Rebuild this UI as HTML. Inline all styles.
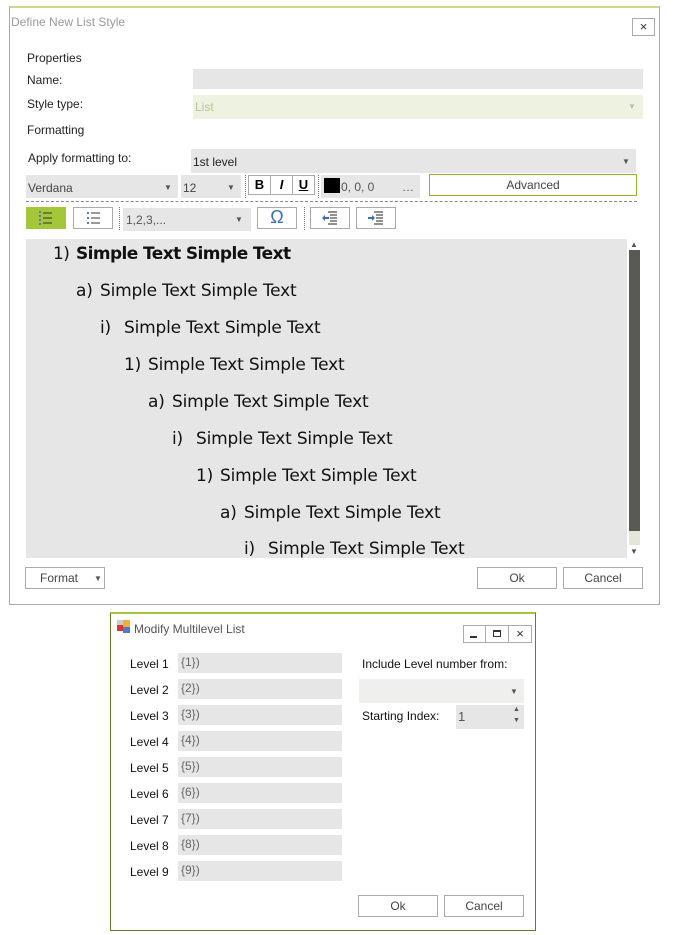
<!DOCTYPE html>
<html><head><meta charset="utf-8"><style>
*{box-sizing:border-box;margin:0;padding:0}
body{width:678px;height:935px;background:#fff;font-family:"Liberation Sans",sans-serif;font-size:12px;color:#222;position:relative;overflow:hidden}
.a{position:absolute}
.g{background:#e6e6e6}
.btn{position:absolute;border:1px solid #ababab;background:#fff;text-align:center;color:#444}
.dd{position:absolute;font-size:8px;color:#555}
.pv{position:absolute;font-family:"DejaVu Sans",sans-serif;font-size:17px;color:#111;letter-spacing:-0.2px;white-space:nowrap}
.pv b{display:inline-block;width:24px;font-weight:normal}
.lv{position:absolute;left:130px;font-size:12px;color:#111}
.lf{position:absolute;left:178px;width:164px;height:20px;background:#e6e6e6;color:#666;padding:2px 0 0 3px}
</style></head><body>
<div class="a" style="left:9px;top:6px;width:651px;height:599px;border:1px solid #a9a9a9;border-top:2px solid #c8dc8c"></div>
<div class="a" style="left:11px;top:15px;color:#999;font-size:12px">Define New List Style</div>
<div class="btn" style="left:632px;top:18px;width:23px;height:18px;line-height:15px;font-size:13px;color:#333">×</div>
<div class="a" style="left:27px;top:51px">Properties</div>
<div class="a" style="left:27px;top:73px">Name:</div>
<div class="a g" style="left:193px;top:69px;width:450px;height:20px"></div>
<div class="a" style="left:27px;top:97px">Style type:</div>
<div class="a" style="left:193px;top:95px;width:450px;height:24px;background:#eef2e0;color:#b5c59a;padding:5px 0 0 2px">List</div>
<div class="dd" style="left:628px;top:102px;color:#b5c59a">▼</div>
<div class="a" style="left:27px;top:123px">Formatting</div>
<div class="a" style="left:28px;top:151px">Apply formatting to:</div>
<div class="a g" style="left:191px;top:149px;width:445px;height:24px;padding:6px 0 0 2px">1st level</div>
<div class="dd" style="left:622px;top:157px">▼</div>
<div class="a g" style="left:26px;top:175px;width:152px;height:23px;padding:6px 0 0 2px;color:#444">Verdana</div>
<div class="dd" style="left:164px;top:183px">▼</div>
<div class="a g" style="left:181px;top:175px;width:60px;height:23px;padding:6px 0 0 2px;color:#444">12</div>
<div class="dd" style="left:227px;top:183px">▼</div>
<div class="a" style="left:245px;top:175px;height:23px;border-left:1px dotted #777"></div>
<div class="btn" style="left:248px;top:175px;width:23px;height:20px;font-weight:bold;font-size:13px;line-height:18px;color:#000">B</div>
<div class="btn" style="left:270px;top:175px;width:23px;height:20px;font-weight:bold;font-style:italic;font-size:13px;line-height:18px;color:#000">I</div>
<div class="btn" style="left:292px;top:175px;width:23px;height:20px;font-weight:bold;text-decoration:underline;font-size:13px;line-height:18px;color:#000">U</div>
<div class="a" style="left:318px;top:175px;height:23px;border-left:1px dotted #777"></div>
<div class="a g" style="left:321px;top:175px;width:99px;height:23px"></div>
<div class="a" style="left:324px;top:178px;width:16px;height:15px;background:#000"></div>
<div class="a" style="left:341px;top:180px;color:#555">0, 0, 0</div>
<div class="a" style="left:402px;top:180px;color:#555">…</div>
<div class="a" style="left:429px;top:174px;width:208px;height:22px;border:1px solid #8dbb1f;text-align:center;line-height:20px;color:#444">Advanced</div>
<div class="a" style="left:26px;top:201px;width:611px;border-top:1px dashed #888"></div>
<div class="a" style="left:26px;top:207px;width:40px;height:22px;background:#a4c639"></div>
<svg class="a" style="left:36px;top:210px" width="18" height="16"><g fill="#5a7ab8"><rect x="3" y="1" width="2" height="2"/><rect x="3" y="5" width="2" height="2"/><rect x="3" y="9" width="2" height="2"/><rect x="3" y="13" width="2" height="2"/></g><g stroke="#333"><line x1="7" y1="3" x2="16" y2="3"/><line x1="7" y1="8" x2="16" y2="8"/><line x1="7" y1="13" x2="16" y2="13"/></g></svg>
<div class="btn" style="left:73px;top:207px;width:40px;height:22px"></div>
<svg class="a" style="left:84px;top:210px" width="18" height="16"><g fill="#5a7ab8"><rect x="3" y="2" width="2" height="2"/><rect x="3" y="7" width="2" height="2"/><rect x="3" y="12" width="2" height="2"/></g><g stroke="#333"><line x1="7" y1="3" x2="16" y2="3"/><line x1="7" y1="8" x2="16" y2="8"/><line x1="7" y1="13" x2="16" y2="13"/></g></svg>
<div class="a" style="left:119px;top:207px;height:23px;border-left:1px dotted #777"></div>
<div class="a g" style="left:123px;top:208px;width:128px;height:23px;padding:5px 0 0 3px;color:#555">1,2,3,...</div>
<div class="dd" style="left:235px;top:215px">▼</div>
<div class="btn" style="left:257px;top:207px;width:40px;height:22px;color:#3a6fc0;font-size:18px;line-height:19px">Ω</div>
<div class="a" style="left:304px;top:207px;height:23px;border-left:1px dotted #777"></div>
<div class="btn" style="left:310px;top:207px;width:40px;height:22px"></div>
<svg class="a" style="left:321px;top:210px" width="18" height="16"><g stroke="#222"><line x1="7" y1="2" x2="16" y2="2"/><line x1="9" y1="5" x2="16" y2="5"/><line x1="9" y1="8" x2="16" y2="8"/><line x1="9" y1="11" x2="16" y2="11"/><line x1="7" y1="14" x2="16" y2="14"/></g><path d="M2 8h6" stroke="#3a6fc0" stroke-width="2"/><path d="M1 8l3-3v6z" fill="#3a6fc0"/></svg>
<div class="btn" style="left:356px;top:207px;width:40px;height:22px"></div>
<svg class="a" style="left:367px;top:210px" width="18" height="16"><g stroke="#222"><line x1="7" y1="2" x2="16" y2="2"/><line x1="9" y1="5" x2="16" y2="5"/><line x1="9" y1="8" x2="16" y2="8"/><line x1="9" y1="11" x2="16" y2="11"/><line x1="7" y1="14" x2="16" y2="14"/></g><path d="M1 8h5" stroke="#3a6fc0" stroke-width="2"/><path d="M8 8l-3-3v6z" fill="#3a6fc0"/></svg>
<div class="a g" style="left:26px;top:239px;width:601px;height:319px"></div>
<div class="a" style="left:627px;top:239px;width:16px;height:319px;background:#fff"></div>
<div class="a" style="left:629px;top:250px;width:11px;height:281px;background:#5a5a55"></div>
<div class="a" style="left:629px;top:531px;width:11px;height:14px;background:#e4e6d8"></div>
<div class="dd" style="left:630px;top:240px">▲</div>
<div class="dd" style="left:630px;top:547px">▼</div>
<div class="pv" style="left:53px;top:244px;font-weight:bold;letter-spacing:-0.6px"><b style="font-weight:normal;width:23px">1)</b>Simple Text Simple Text</div>
<div class="pv" style="left:76px;top:281px"><b>a)</b>Simple Text Simple Text</div>
<div class="pv" style="left:100px;top:318px"><b>i)</b>Simple Text Simple Text</div>
<div class="pv" style="left:124px;top:355px"><b>1)</b>Simple Text Simple Text</div>
<div class="pv" style="left:148px;top:392px"><b>a)</b>Simple Text Simple Text</div>
<div class="pv" style="left:172px;top:429px"><b>i)</b>Simple Text Simple Text</div>
<div class="pv" style="left:196px;top:466px"><b>1)</b>Simple Text Simple Text</div>
<div class="pv" style="left:220px;top:503px"><b>a)</b>Simple Text Simple Text</div>
<div class="pv" style="left:244px;top:539px"><b>i)</b>Simple Text Simple Text</div>
<div class="btn" style="left:25px;top:567px;width:80px;height:22px;line-height:20px;text-align:left;padding-left:14px">Format</div>
<div class="dd" style="left:94px;top:574px">▼</div>
<div class="btn" style="left:477px;top:567px;width:80px;height:22px;line-height:20px">Ok</div>
<div class="btn" style="left:563px;top:567px;width:80px;height:22px;line-height:20px">Cancel</div>
<div class="a" style="left:110px;top:612px;width:426px;height:319px;border:1px solid #6b7a1e;border-top:2px solid #a4c639"></div>
<svg class="a" style="left:117px;top:620px" width="14" height="14"><rect x="0" y="5" width="6" height="6" fill="#d33"/><rect x="6" y="0" width="7" height="7" fill="#f0b030"/><rect x="6" y="7" width="7" height="6" fill="#4a7ad0"/><rect x="0" y="0" width="6" height="5" fill="#ccc"/></svg>
<div class="a" style="left:134px;top:622px;color:#555">Modify Multilevel List</div>
<div class="btn" style="left:463px;top:625px;width:23px;height:18px"></div>
<div class="a" style="left:470px;top:636px;width:7px;height:2px;background:#333"></div>
<div class="btn" style="left:485px;top:625px;width:24px;height:18px"></div>
<div class="a" style="left:493px;top:630px;width:8px;height:7px;border:1px solid #333;border-top-width:2px"></div>
<div class="btn" style="left:508px;top:625px;width:24px;height:18px;font-size:13px;line-height:15px;color:#333">×</div>
<div class="lv" style="top:657px">Level 1</div><div class="lf" style="top:653px">{1})</div>
<div class="lv" style="top:683px">Level 2</div><div class="lf" style="top:679px">{2})</div>
<div class="lv" style="top:709px">Level 3</div><div class="lf" style="top:705px">{3})</div>
<div class="lv" style="top:735px">Level 4</div><div class="lf" style="top:731px">{4})</div>
<div class="lv" style="top:761px">Level 5</div><div class="lf" style="top:757px">{5})</div>
<div class="lv" style="top:787px">Level 6</div><div class="lf" style="top:783px">{6})</div>
<div class="lv" style="top:813px">Level 7</div><div class="lf" style="top:809px">{7})</div>
<div class="lv" style="top:839px">Level 8</div><div class="lf" style="top:835px">{8})</div>
<div class="lv" style="top:865px">Level 9</div><div class="lf" style="top:861px">{9})</div>
<div class="a" style="left:362px;top:657px;color:#111">Include Level number from:</div>
<div class="a" style="left:359px;top:679px;width:165px;height:24px;background:#eff0ee"></div>
<div class="dd" style="left:510px;top:687px">▼</div>
<div class="a" style="left:362px;top:709px;color:#111">Starting Index:</div>
<div class="a g" style="left:456px;top:705px;width:68px;height:24px;padding:4px 0 0 2px;color:#555;font-size:13px">1</div>
<div class="a" style="left:513px;top:706px;font-size:7px;color:#555">▲</div>
<div class="a" style="left:513px;top:717px;font-size:7px;color:#555">▼</div>
<div class="btn" style="left:358px;top:895px;width:80px;height:22px;line-height:20px">Ok</div>
<div class="btn" style="left:444px;top:895px;width:80px;height:22px;line-height:20px">Cancel</div>
</body></html>
